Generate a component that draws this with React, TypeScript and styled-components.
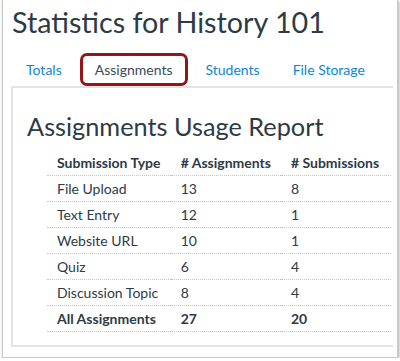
import styled, { createGlobalStyle } from "styled-components";

const GlobalStyle = createGlobalStyle`
	body {
		margin: 0;
		background: #ffffff;
		font-family: Lato, "Open Sans", sans-serif;
		color: #2d3b45;
	}
`;

type Row = {
	type: string;
	assignments: number;
	submissions: number;
	total?: boolean;
};

const rows: Row[] = [
	{ type: "File Upload", assignments: 13, submissions: 8 },
	{ type: "Text Entry", assignments: 12, submissions: 1 },
	{ type: "Website URL", assignments: 10, submissions: 1 },
	{ type: "Quiz", assignments: 6, submissions: 4 },
	{ type: "Discussion Topic", assignments: 8, submissions: 4 },
	{ type: "All Assignments", assignments: 27, submissions: 20, total: true },
];

const tabs = ["Totals", "Assignments", "Students", "File Storage"];

const Frame = styled.div`
	box-sizing: border-box;
	width: 396px;
	height: 358px;
	margin-left: 2px;
	border: 1px solid #c9c9c9;
	border-top: none;
	box-shadow: 1px 1px 3px rgba(0, 0, 0, 0.35);
	padding: 4px 4px 0 8px;
`;

const Title = styled.h1`
	margin: 0 0 13px 1px;
	font-size: 28.7px;
	line-height: 36px;
	font-weight: 400;
	color: #2d3b45;
`;

const TabList = styled.div`
	display: flex;
	gap: 2px;
`;

const Tab = styled.div<{ $active?: boolean }>`
	flex-shrink: 0;
	white-space: nowrap;
	padding: 0 13px 0 12px;
	border: 3px solid ${(p) => (p.$active ? "#931517" : "transparent")};
	border-radius: 7px;
	font-size: 14px;
	line-height: 27px;
	color: ${(p) => (p.$active ? "#394b58" : "#0e86d4")};
`;

const Panel = styled.div`
	border: 2px solid #e3e3e3;
	border-right: none;
	padding: 23px 0 13px 14px;
`;

const Heading = styled.h2`
	margin: 0 0 9px;
	font-size: 25.3px;
	line-height: 30px;
	font-weight: 400;
	color: #2d3b45;
`;

const Table = styled.table`
	border-collapse: collapse;
	margin-left: 20px;
	width: 344px;
	font-size: 14px;
`;

const Cell = styled.td<{ $bold?: boolean }>`
	padding: 0 10px;
	line-height: 25px;
	border-bottom: 1px dotted #c4c4c4;
	font-weight: ${(p) => (p.$bold ? 700 : 400)};
	text-align: left;
	white-space: nowrap;
`;

const HeadCell = styled(Cell).attrs({ as: "th" })``;

export default function App() {
	return (
		<>
			<GlobalStyle />
			<Frame>
				<Title>Statistics for History 101</Title>
				<TabList>
					{tabs.map((t) => (
						<Tab key={t} $active={t === "Assignments"}>
							{t}
						</Tab>
					))}
				</TabList>
				<Panel>
					<Heading>Assignments Usage Report</Heading>
					<Table>
						<colgroup>
							<col style={{ width: 124 }} />
							<col style={{ width: 106 }} />
							<col style={{ width: 114 }} />
						</colgroup>
						<thead>
							<tr>
								<HeadCell $bold>Submission Type</HeadCell>
								<HeadCell $bold># Assignments</HeadCell>
								<HeadCell $bold># Submissions</HeadCell>
							</tr>
						</thead>
						<tbody>
							{rows.map((r) => (
								<tr key={r.type}>
									<Cell $bold={r.total}>{r.type}</Cell>
									<Cell $bold={r.total}>{r.assignments}</Cell>
									<Cell $bold={r.total}>{r.submissions}</Cell>
								</tr>
							))}
						</tbody>
					</Table>
				</Panel>
			</Frame>
		</>
	);
}
